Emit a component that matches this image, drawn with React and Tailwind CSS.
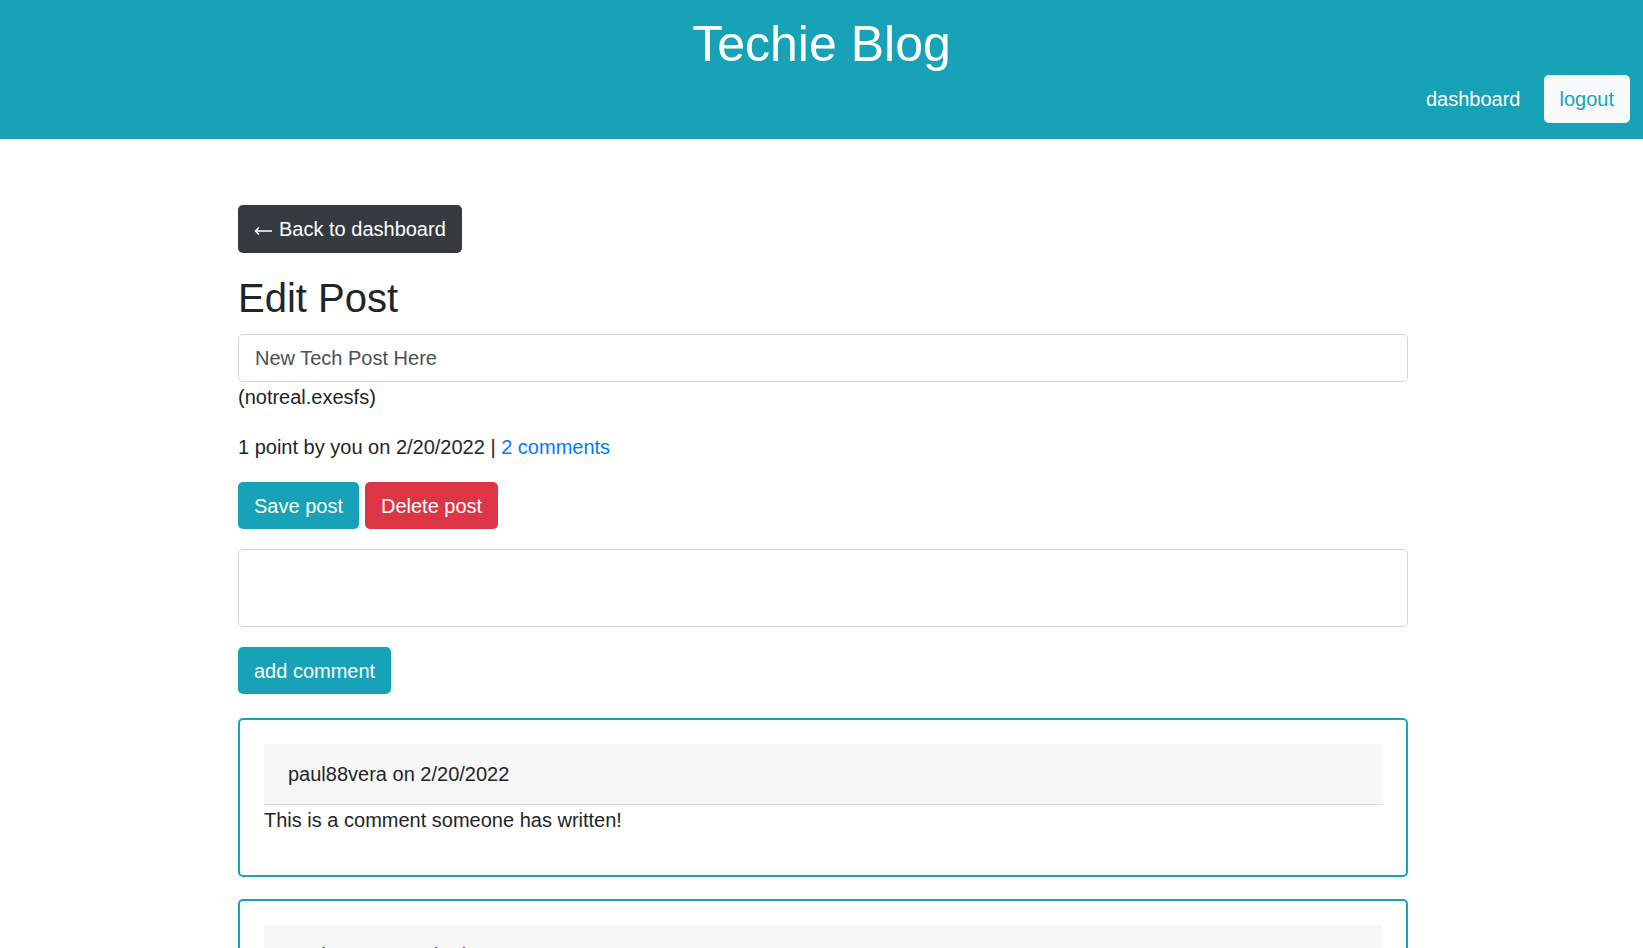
const comments = [
  { author: "paul88vera", date: "2/20/2022", text: "This is a comment someone has written!" },
  { author: "paul88vera", date: "2/20/2022", text: "Another comment on this post." },
];

export default function App() {
  return (
    <div className="min-h-screen bg-white text-[#212529] font-['Liberation_Sans',Arial,sans-serif]">
      {/* HEADER */}
      <header className="bg-[#17a2b8] pt-[15px] pb-[16px] px-[13px]">
        <h1 className="text-center text-white text-[50px] leading-[58px] font-normal">Techie Blog</h1>
        <nav className="flex items-center justify-end gap-[23px] mt-[2px]">
          <a href="#" className="text-white text-[20px] leading-[30px]">dashboard</a>
          <button className="h-[48px] px-4 rounded-[5px] bg-[#f8f9fa] text-[#17a2b8] text-[20px] leading-[30px]">
            logout
          </button>
        </nav>
      </header>

      {/* MAIN */}
      <main className="mx-auto w-[1173px] pl-[3px] pt-[66px] pb-10">
        <button className="h-[48px] px-4 flex items-center gap-[7px] rounded-[5px] bg-[#343a40] text-white text-[20px] leading-[30px]">
          <svg width="18" height="10" viewBox="0 0 18 10" className="mt-[4px]" fill="none" stroke="currentColor" strokeWidth="1.5">
            <path d="M18 5H1.5M5 1.5L1.5 5L5 8.5" />
          </svg>
          Back to dashboard
        </button>

        <h2 className="mt-[21px] text-[40px] leading-[48px] font-normal">Edit Post</h2>

        <input
          defaultValue="New Tech Post Here"
          className="mt-[12px] block w-full h-[48px] px-4 border border-[#ced4da] rounded-[5px] text-[20px] text-[#495057] outline-none"
        />
        <p className="text-[20px] leading-[30px]">(notreal.exesfs)</p>

        <p className="mt-[20px] text-[20px] leading-[30px]">
          1 point by you on 2/20/2022 | <a href="#" className="text-[#007bff]">2 comments</a>
        </p>

        <div className="mt-[20px] flex gap-[6px]">
          <button className="h-[47px] px-4 rounded-[5px] bg-[#17a2b8] text-white text-[20px] leading-[30px]">
            Save post
          </button>
          <button className="h-[47px] px-4 rounded-[5px] bg-[#dc3545] text-white text-[20px] leading-[30px]">
            Delete post
          </button>
        </div>

        <textarea className="mt-[20px] block w-full h-[78px] px-4 py-2 border border-[#ced4da] rounded-[5px] text-[20px] resize-none outline-none" />

        <button className="mt-[20px] h-[47px] px-4 rounded-[5px] bg-[#17a2b8] text-white text-[20px] leading-[30px]">
          add comment
        </button>

        <div className="mt-[24px] flex flex-col gap-[22px]">
          {comments.map((c, i) => (
            <div key={i} className="border-2 border-[#17a2b8] rounded-[5px] p-6">
              <div className="h-[61px] flex items-center px-6 bg-[#f7f7f7] border-b border-[#dcdcdc] text-[20px]">
                {c.author} on {c.date}
              </div>
              <p className="text-[20px] leading-[30px] mb-4">{c.text}</p>
            </div>
          ))}
        </div>
      </main>
    </div>
  );
}
